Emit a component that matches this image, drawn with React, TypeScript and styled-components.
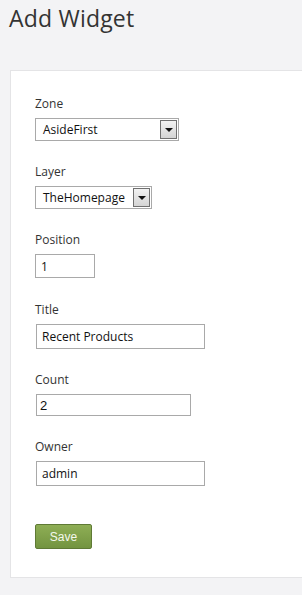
import React from "react";
import styled, { createGlobalStyle } from "styled-components";

const Global = createGlobalStyle`
  html, body { margin: 0; padding: 0; background: #f3f3f5; }
  body { font-family: "Open Sans", "Noto Sans", sans-serif; color: #333; }
  #root { min-height: 595px; }
`;

const Page = styled.div`
  display: flex;
  flex-direction: column;
  padding-top: 3px;
`;

const Heading = styled.h1`
  margin: 0 0 0 9px;
  font-size: 23px;
  font-weight: 400;
  line-height: 31px;
  color: #333;
  letter-spacing: 0.2px;
`;

const Panel = styled.div`
  margin: 36px 0 0 10px;
  background: #fff;
  border: 1px solid #e4e4e6;
  border-right: none;
  padding: 23px 0 28px 24px;
  display: flex;
  flex-direction: column;
  min-height: 455px;
`;

const Field = styled.div<{ $mb: number }>`
  display: flex;
  flex-direction: column;
  align-items: flex-start;
  gap: 6px;
  margin-bottom: ${(p) => p.$mb}px;
`;

const Label = styled.label`
  font-size: 12px;
  line-height: 18px;
  padding-top: 1px;
  margin-bottom: -1px;
  color: #333;
`;

const Select = styled.div<{ $w: number }>`
  box-sizing: border-box;
  width: ${(p) => p.$w}px;
  height: 23px;
  border: 1px solid #a9a9a9;
  background: #fff;
  display: flex;
  align-items: center;
  justify-content: space-between;
  padding: 0 1px 0 7px;
  font-size: 12px;
  color: #111;
`;

const DropButton = styled.span`
  box-sizing: border-box;
  width: 17px;
  height: 19px;
  border: 1px solid #707070;
  background: linear-gradient(#f2f2f2, #d4d4d4);
  display: flex;
  align-items: center;
  justify-content: center;
`;

const Arrow = styled.span`
  width: 0;
  height: 0;
  border-left: 4px solid transparent;
  border-right: 4px solid transparent;
  border-top: 4px solid #111;
`;

const Input = styled.div<{ $w: number; $h: number; $ml?: number; $mono?: boolean }>`
  box-sizing: border-box;
  width: ${(p) => p.$w}px;
  height: ${(p) => p.$h}px;
  margin-left: ${(p) => p.$ml ?? 0}px;
  border: 1px solid #a9a9a9;
  background: #fff;
  display: flex;
  align-items: center;
  padding-left: ${(p) => (p.$mono ? 3 : 5)}px;
  font-size: ${(p) => (p.$mono ? 13 : 12)}px;
  font-family: ${(p) => (p.$mono ? '"Liberation Sans", Arial, sans-serif' : 'inherit')};
  color: #111;
`;

const SaveButton = styled.button`
  box-sizing: border-box;
  margin-top: 17px;
  width: 57px;
  height: 25px;
  border: 1px solid #5f7a35;
  border-radius: 2px;
  background: linear-gradient(#8eae55, #739440);
  color: #f4f8ec;
  font-family: "Liberation Sans", Arial, sans-serif;
  font-size: 12px;
  padding: 0;
  align-self: flex-start;
`;

export default function App() {
  return (
    <>
      <Global />
      <Page>
        <Heading>Add Widget</Heading>
        <Panel>
          <Field $mb={21}>
            <Label>Zone</Label>
            <Select $w={144}>
              <span>AsideFirst</span>
              <DropButton><Arrow /></DropButton>
            </Select>
          </Field>
          <Field $mb={21}>
            <Label>Layer</Label>
            <Select $w={117}>
              <span>TheHomepage</span>
              <DropButton><Arrow /></DropButton>
            </Select>
          </Field>
          <Field $mb={22}>
            <Label>Position</Label>
            <Input $w={60} $h={24}>1</Input>
          </Field>
          <Field $mb={21}>
            <Label>Title</Label>
            <Input $w={169} $h={25} $ml={1}>Recent Products</Input>
          </Field>
          <Field $mb={21}>
            <Label>Count</Label>
            <Input $w={155} $h={22} $ml={1} $mono>2</Input>
          </Field>
          <Field $mb={21}>
            <Label>Owner</Label>
            <Input $w={169} $h={25} $ml={1}>admin</Input>
          </Field>
          <SaveButton>Save</SaveButton>
        </Panel>
      </Page>
    </>
  );
}
